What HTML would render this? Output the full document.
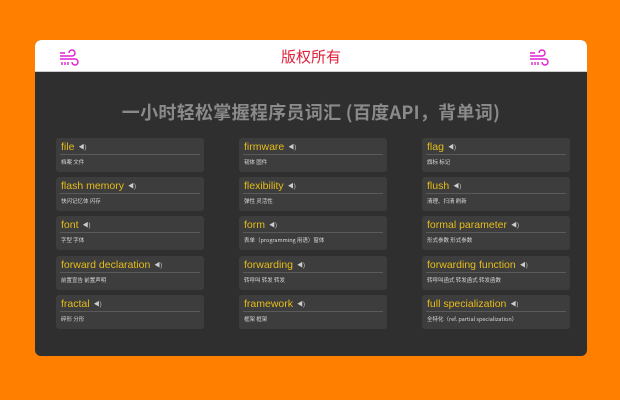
<!DOCTYPE html>
<html><head><meta charset="utf-8">
<style>
*{margin:0;padding:0;box-sizing:border-box}
html,body{width:620px;height:400px;overflow:hidden;background:#ff7f00;font-family:"Liberation Sans","Noto Sans CJK SC",sans-serif}
.wrap{position:absolute;left:35px;top:40px;width:552px;height:316px;background:#2f2f2f;border-radius:6px;overflow:hidden}
.hdr{position:absolute;left:0;top:0;width:552px;height:32px;background:#fff;border-radius:6px 6px 0 0;border-bottom:1px solid #ccc}
.hdr .t{position:absolute;left:0;width:100%;top:6px;text-align:center;color:#e0203a;font-size:15px;font-family:"Noto Sans CJK SC",sans-serif}
.hdr svg{position:absolute;top:8px}
.title{position:absolute;left:0;width:100%;top:59px;text-align:center;color:#8a8a8a;font-size:18px;font-weight:bold;font-family:"Noto Sans CJK SC",sans-serif;letter-spacing:0.3px}
.c{position:absolute;width:148px;height:34px;background:#3d3d3d;border-radius:3px}
.c .w{position:absolute;left:5px;top:3px;color:#e6bd1a;font-size:10.5px;white-space:nowrap}
.c .w span{color:#ccc;font-size:6px;margin-left:4px;vertical-align:1px}
.c .l{position:absolute;left:4px;right:4px;top:16px;height:1px;background:#5a5a5a}
.c .m{position:absolute;left:5px;top:20px;color:#d8d8d8;font-size:5.5px;white-space:nowrap;font-family:"Noto Sans CJK SC",sans-serif}
</style></head><body>
<div class="wrap">
<div class="hdr">
<svg style="left:24px" width="20" height="18" viewBox="0 0 20 18" fill="none" stroke="#e020d0" stroke-width="1.4"><path d="M1 8h12a3 3 0 1 0-3-3"/><path d="M1 11h15a3 3 0 1 1-3 3"/><path d="M1 5h5"/><path d="M3 14v3M6 14v3M9 14v3"/></svg>
<svg style="left:494px" width="20" height="18" viewBox="0 0 20 18" fill="none" stroke="#e020d0" stroke-width="1.4"><path d="M1 8h12a3 3 0 1 0-3-3"/><path d="M1 11h15a3 3 0 1 1-3 3"/><path d="M1 5h5"/><path d="M3 14v3M6 14v3M9 14v3"/></svg>
<div class="t">版权所有</div>
</div>
<div class="title">一小时轻松掌握程序员词汇 (百度API，背单词)</div>

<div class="c" style="left:21px;top:98px"><div class="w">file<span>◀)</span></div><div class="l"></div><div class="m">档案 文件</div></div>
<div class="c" style="left:204px;top:98px"><div class="w">firmware<span>◀)</span></div><div class="l"></div><div class="m">韧体 固件</div></div>
<div class="c" style="left:387px;top:98px"><div class="w">flag<span>◀)</span></div><div class="l"></div><div class="m">旗标 标记</div></div>

<div class="c" style="left:21px;top:137px"><div class="w">flash memory<span>◀)</span></div><div class="l"></div><div class="m">快闪记忆体 闪存</div></div>
<div class="c" style="left:204px;top:137px"><div class="w">flexibility<span>◀)</span></div><div class="l"></div><div class="m">弹性 灵活性</div></div>
<div class="c" style="left:387px;top:137px"><div class="w">flush<span>◀)</span></div><div class="l"></div><div class="m">清理、扫清 刷新</div></div>

<div class="c" style="left:21px;top:176px"><div class="w">font<span>◀)</span></div><div class="l"></div><div class="m">字型 字体</div></div>
<div class="c" style="left:204px;top:176px"><div class="w">form<span>◀)</span></div><div class="l"></div><div class="m">表单（programming 用语）窗体</div></div>
<div class="c" style="left:387px;top:176px"><div class="w">formal parameter<span>◀)</span></div><div class="l"></div><div class="m">形式参数 形式参数</div></div>

<div class="c" style="left:21px;top:216px"><div class="w">forward declaration<span>◀)</span></div><div class="l"></div><div class="m">前置宣告 前置声明</div></div>
<div class="c" style="left:204px;top:216px"><div class="w">forwarding<span>◀)</span></div><div class="l"></div><div class="m">转呼叫 转发 转发</div></div>
<div class="c" style="left:387px;top:216px"><div class="w">forwarding function<span>◀)</span></div><div class="l"></div><div class="m">转呼叫函式 转发函式 转发函数</div></div>

<div class="c" style="left:21px;top:255px"><div class="w">fractal<span>◀)</span></div><div class="l"></div><div class="m">碎形 分形</div></div>
<div class="c" style="left:204px;top:255px"><div class="w">framework<span>◀)</span></div><div class="l"></div><div class="m">框架 框架</div></div>
<div class="c" style="left:387px;top:255px"><div class="w">full specialization<span>◀)</span></div><div class="l"></div><div class="m">全特化（ref. partial specialization）</div></div>
</div>
</body></html>
